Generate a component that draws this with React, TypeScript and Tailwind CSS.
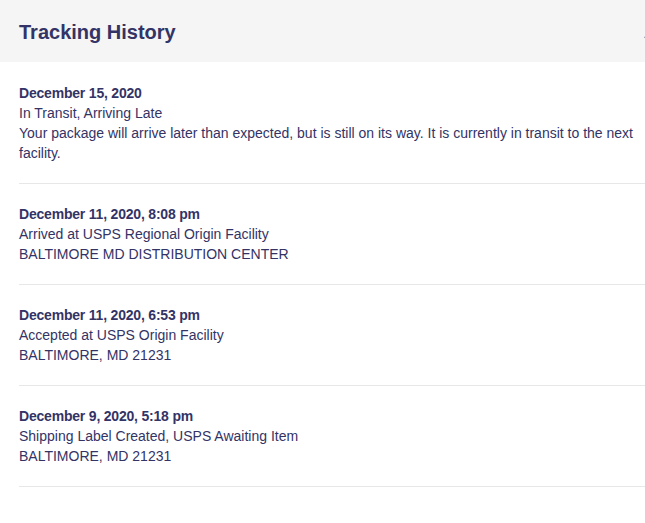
import React from 'react';

const events = [
  {
    date: 'December 15, 2020',
    status: 'In Transit, Arriving Late',
    detail:
      'Your package will arrive later than expected, but is still on its way. It is currently in transit to the next facility.',
  },
  {
    date: 'December 11, 2020, 8:08 pm',
    status: 'Arrived at USPS Regional Origin Facility',
    detail: 'BALTIMORE MD DISTRIBUTION CENTER',
  },
  {
    date: 'December 11, 2020, 6:53 pm',
    status: 'Accepted at USPS Origin Facility',
    detail: 'BALTIMORE, MD 21231',
  },
  {
    date: 'December 9, 2020, 5:18 pm',
    status: 'Shipping Label Created, USPS Awaiting Item',
    detail: 'BALTIMORE, MD 21231',
  },
];

export default function App() {
  return (
    <div className="w-[645px] h-[523px] overflow-hidden bg-white font-['Liberation_Sans',Arial,sans-serif] text-[#333366]">
      <div className="w-[680px]">
        {/* Header */}
        <div className="flex h-[62px] items-center justify-between bg-[#f5f5f5] px-[19px] pt-[2px]">
          <h2 className="text-[20px] font-bold leading-none">Tracking History</h2>
          <svg width="18" height="18" viewBox="0 0 18 18" className="mt-[6px]">
            <path d="M2 12 L9 5 L16 12" fill="none" stroke="#333366" strokeWidth="2" />
          </svg>
        </div>

        {/* Events */}
        <div className="px-[19px] pt-px">
          {events.map((ev) => (
            <div key={ev.date} className="border-b border-[#e7e7e7] py-5 text-[14px] leading-5">
              <p className="font-bold tracking-[-0.2px]">{ev.date}</p>
              <p>{ev.status}</p>
              <p>{ev.detail}</p>
            </div>
          ))}
        </div>
      </div>
    </div>
  );
}
